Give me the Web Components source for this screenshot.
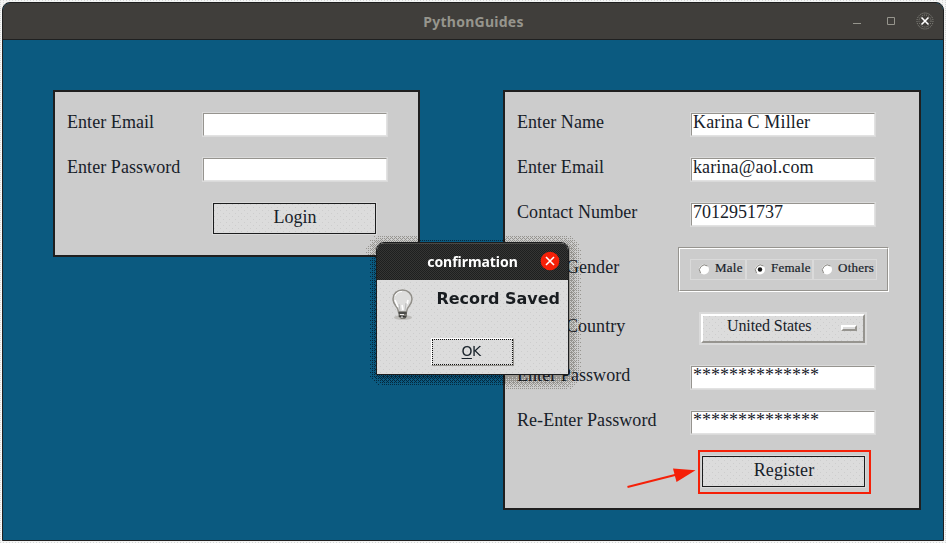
<!DOCTYPE html>
<html lang="en">
<head>
<meta charset="utf-8">
<title>PythonGuides</title>
<style>
html,body{margin:0;width:946px;height:543px;overflow:hidden}
body{color:#172129;font:18px/25px "Liberation Serif",serif;background:conic-gradient(at 1px 1px,#0000 75%,#d6d8d8 0) 0 0/3px 2px #f4f5f5}
</style>
</head>
<body>
<app-window heading="PythonGuides">
  <form-panel style="--col:135px;width:367px;height:167px">
    <form-row label="Enter Email"><text-entry></text-entry></form-row>
    <form-row label="Enter Password"><text-entry></text-entry></form-row>
    <form-row><tk-button style="margin-left:10px">Login</tk-button></form-row>
  </form-panel>
  <form-panel style="--col:173px;width:418px;height:420px">
    <form-row label="Enter Name"><text-entry style="letter-spacing:.15px">Karina C Miller</text-entry></form-row>
    <form-row label="Enter Email"><text-entry style="letter-spacing:.12px">karina@aol.com</text-entry></form-row>
    <form-row label="Contact Number"><text-entry>7012951737</text-entry></form-row>
    <form-row label="Select Gender"><radio-group><radio-item style="width:56px">Male</radio-item><radio-item style="width:67px" checked>Female</radio-item><radio-item style="width:64px">Others</radio-item></radio-group></form-row>
    <form-row label="Select Country"><option-menu>United States</option-menu></form-row>
    <form-row label="Enter Password"><text-entry>**************</text-entry></form-row>
    <form-row label="Re-Enter Password"><text-entry>**************</text-entry></form-row>
    <form-row><tk-button style="margin-left:11px" marked>Register</tk-button></form-row>
  </form-panel>
</app-window>
<message-dialog heading="confirmation">Record Saved</message-dialog>
<script>
const define = (name, html, setup) => customElements.define(name, class extends HTMLElement {
  connectedCallback() {
    if (this.shadowRoot) return;
    const t = document.createElement('template');
    t.innerHTML = '<style>*{box-sizing:border-box}:host{box-sizing:border-box}</style>' + html;
    this.attachShadow({mode: 'open'}).append(t.content.cloneNode(true));
    if (setup) setup(this, this.shadowRoot);
  }
});
const dots = 'conic-gradient(at 1px 1px,#0000 75%,#cdcdcd 0) 0 0/6px 6px,conic-gradient(at 1px 1px,#0000 75%,#cdcdcd 0) 3px 3px/6px 6px #dcdcdc';
const setHeading = (el, root) => { root.querySelector('.title').textContent = el.getAttribute('heading'); };

define('app-window', `
<style>
:host{display:flex;flex-direction:column;width:942px;height:539px;margin:2px;border:1px solid #202020;border-radius:8px 8px 0 0;background:#0b5a80;overflow:hidden}
header{display:grid;grid-template-columns:1fr auto 1fr;align-items:center;height:37px;flex:none;background:#403e3b;border-bottom:1px solid #202020;border-radius:7px 7px 0 0}
.title{grid-column:2;font:bold 14px/20px "Noto Sans","Open Sans",sans-serif;color:#96958d;letter-spacing:.25px;padding:2px 0 0 1px}
.controls{justify-self:end;height:36px;width:98px}
main{display:flex;gap:83px;padding:50px 0 0 50px;align-items:flex-start}
</style>
<header><div class="title"></div>
<svg class="controls" viewBox="845 3 98 36" fill="none">
<path d="M853 23.5h8" stroke="#96958d"/><path d="M887.5 17.5h7v7h-7z" stroke="#96958d"/>
<circle cx="925" cy="21" r="8" stroke="#8f8e87" stroke-dasharray="1 1"/><circle cx="925" cy="21" r="6" stroke="#8f8e87" stroke-dasharray="1 1.2"/>
<path d="M921.5 17.5l7 7m0-7l-7 7" stroke="#fff" stroke-width="1.6"/>
</svg></header>
<main><slot></slot></main>`, setHeading);

define('form-panel', `
<style>:host{display:flex;flex-direction:column;gap:20px;flex:none;padding:20px 0 0 12px;border:2px solid #1f1f1f;background:#ccc}</style>
<slot></slot>`);

define('form-row', `
<style>:host{display:flex;align-items:center}
label{width:var(--col);flex:none;height:25px;line-height:21px;white-space:nowrap;letter-spacing:.06px}</style>
<label></label><slot></slot>`, (el, root) => { root.querySelector('label').textContent = el.getAttribute('label') || ''; });

define('text-entry', `
<style>
:host{display:block;width:186px;height:25px;border:1px solid #dadada}
div{height:23px;border:1px solid;border-color:#96948f #e2e2e2 #e2e2e2 #96948f;background:#fff;padding-left:1px;line-height:17px;overflow:hidden}
</style><div><slot></slot></div>`);

define('tk-button', `
<style>
:host{display:block;position:relative;width:165px;height:33px;border:1px solid #dadada}
div{height:31px;border:1px solid #1b1c1d;background:${dots};text-align:center;line-height:26px;padding-left:1px;letter-spacing:.05px}
:host([marked])::after{content:"";position:absolute;inset:-6px -6px -7px -4px;border:2px solid #f52008}
</style><div><slot></slot></div>`);

define('radio-group', `
<style>
:host{display:block;width:211px;height:45px;margin-left:-12px;border:1px solid;border-color:#96948f #fff #fff #96948f}
div{display:flex;height:43px;padding:10px 0 0 10px;border:1px solid;border-color:#fff #96948f #96948f #fff}
</style><div><slot></slot></div>`);

define('radio-item', `
<style>
:host{display:flex;height:21px;border:1px solid #dadada;padding-left:7px;font-size:13px;line-height:15px;gap:5px;white-space:nowrap;-webkit-text-stroke:.2px;letter-spacing:.25px}
svg{flex:none;margin-top:4px}
.dot{display:none}:host([checked]) .dot{display:block}
</style>
<svg width="12" height="12" viewBox="0 0 12 12"><circle cx="6" cy="5.500" r="5" fill="#fff"/><path d="M2.500 9A5 5 0 0 1 9.500 2" fill="none" stroke="#85837e"/><circle class="dot" cx="6" cy="5.500" r="2.200" fill="#151515"/></svg>
<span><slot></slot></span>`);

define('option-menu', `
<style>
:host{display:block;width:168px;height:33px;margin-left:9px;border:2px solid #dadada}
div{display:flex;justify-content:space-between;height:29px;padding:0 6px 0 24px;border:2px solid;border-color:#fff #96948f #96948f #fff;background:${dots};font-size:16px;line-height:20px;letter-spacing:-.1px}
i{width:16px;height:6px;margin-top:9px;border:2px solid;border-color:#fff #96948f #96948f #fff;background:#dcdcdc}
</style><div><span><slot></slot></span><i></i></div>`);

define('message-dialog', `
<style>
:host{display:block;position:absolute;left:376px;top:242px;width:193px;height:133px}
canvas{position:absolute;left:-14px;top:-14px;mix-blend-mode:multiply}
.box{position:relative;height:133px;border:1px solid #1c1d1e;border-radius:8px 8px 0 0;background:${dots};overflow:hidden}
header{display:flex;justify-content:center;height:37px;background:conic-gradient(#1e1f1f 25%,#353534 0 50%,#1e1f1f 0 75%,#353534 0) 0 0/2px 2px;border-top:1px solid #4b4a47}
.title{font:bold 14px/35px "Noto Sans","Open Sans",sans-serif;color:#fff;letter-spacing:-.05px}
.close{position:absolute;right:8px;top:8px}
.body{display:flex;justify-content:space-between;height:58px;padding:9px 8px 0 15px}
.message{font:bold 16px/20px "DejaVu Sans",sans-serif;letter-spacing:0;color:#181c20;white-space:nowrap}
.ok{width:83px;height:28px;margin-left:54px;border:1px solid;border-color:#fff #96948f #96948f #fff}
.ok div{height:26px;border:1px dotted #111;font:14px/22px "DejaVu Sans",sans-serif;letter-spacing:-.7px;text-align:center;padding-right:3px}
u{text-underline-offset:2px;text-decoration-thickness:1px;text-decoration-skip-ink:none}
</style>
<canvas width="221" height="165"></canvas>
<div class="box">
<header><span class="title"></span></header>
<svg class="close" width="20" height="20" viewBox="0 0 20 20"><circle cx="10" cy="10" r="9.3" fill="#f52008"/><path d="M6 6l8 8m0-8l-8 8" stroke="#fff" stroke-width="1.6"/></svg>
<div class="body">
<svg width="21" height="32" viewBox="0 0 21 32"><ellipse cx="11" cy="28.5" rx="9" ry="2.3" fill="#bdbcb9"/><path d="M10.5 1C4.9 1 1 5 1 10c0 4 2.3 6.200 4 8.700 1 1.500 1.200 3.300 1.500 4.300h8c.3-1 .5-2.800 1.500-4.300 1.700-2.500 4-4.700 4-8.700 0-5-3.900-9-9.500-9z" fill="#dededd" stroke="#918f89" stroke-width="1.500"/><path d="M3 7c1-3 4-4.500 7-4.500" stroke="#fff" fill="none"/><path d="M3 11l3 7M15 15l1-4M10 16l1 5" stroke="#fff" stroke-width="1.600"/><path d="M8 22l-1-7M13 22l1-8" stroke="#bbb" fill="none"/><path d="M6.500 22.500h8.500v5l-2 2.500H9l-2.500-2.500z" fill="#777670"/><path d="M6.500 24h8M7 27l7 1" stroke="#222"/><path d="M8 25.500h4M9 28h2" stroke="#eee"/></svg>
<span class="message"><slot></slot></span></div>
<div class="ok"><div><u>O</u>K</div></div>
</div>`, (el, root) => {
  setHeading(el, root);
  // Ordered-dither drop shadow around the 193x133 box, heavier towards the bottom.
  const m = [0,8,2,10,12,4,14,6,3,11,1,9,15,7,13,5];
  const c = root.querySelector('canvas').getContext('2d');
  for (let y = 0; y < 165; y++) for (let x = 0; x < 221; x++) {
    const dx = Math.max(22 - x, x - 200, 0), dy = Math.max(25 - y, y - 143, 0);
    const d = Math.hypot(dx, dy) - 6, px = x + 362, py = y + 228;
    const onPanel = px >= 505 || (px < 418 && py < 255);
    const reach = onPanel ? 15 : 11;
    if ((1 - d / reach) * (onPanel ? 15 : 9) <= m[(y & 3) * 4 + (x & 3)] + 1) continue;
    c.fillStyle = onPanel ? '#bcb9b3' : '#70707a';
    c.fillRect(x, y, 1, 1);
  }
});

define('pointer-arrow', `
<style>:host{display:block;position:absolute;left:625px;top:465px;width:72px;height:26px}svg{display:block}</style>
<svg width="72" height="26" viewBox="625 465 72 26"><path d="M627.500 487L676 474.800" stroke="#f52008" stroke-width="2"/><path d="M695.500 470.300L673 468.500l3.500 13.500z" fill="#f52008"/></svg>`);
document.body.append(document.createElement('pointer-arrow'));
</script>
</body>
</html>
